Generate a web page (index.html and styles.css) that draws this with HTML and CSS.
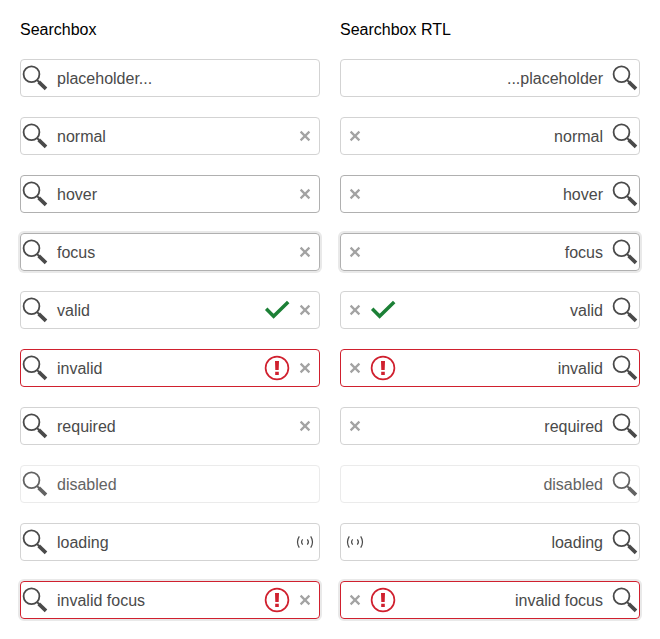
FILE: index.html
```html
<!DOCTYPE html>
<html lang="en">
<head>
<meta charset="utf-8">
<title>Searchbox</title>
<link rel="stylesheet" href="styles.css">
</head>
<body>
<svg class="defs" aria-hidden="true">
  <symbol id="search" viewBox="0 0 24 24"><circle cx="8.5" cy="8.3" r="7.9" fill="none" stroke="currentColor" stroke-width="1.8"/><path d="M14 14l2.4 2.4" stroke="currentColor" stroke-width="2"/><path d="M15.7 15.8L23 22.8" stroke="currentColor" stroke-width="3.7"/></symbol>
  <symbol id="clear" viewBox="0 0 24 24"><path d="M7.6 7.6l8.8 8.8M16.4 7.6l-8.8 8.8" fill="none" stroke="currentColor" stroke-width="2.2"/></symbol>
  <symbol id="valid" viewBox="0 0 24 24"><path d="M1.2 10.8L8.6 18.2L23.2 3.9" fill="none" stroke="currentColor" stroke-width="3.5"/></symbol>
  <symbol id="invalid" viewBox="0 0 24 24"><circle cx="12" cy="12" r="11.4" fill="none" stroke="currentColor" stroke-width="1.7"/><path d="M10 5h4l-.3 9h-3.4zM10.2 15.7h3.6v3.4h-3.6z" fill="currentColor"/></symbol>
  <symbol id="loading" viewBox="0 0 24 24"><path d="M6.3 6.4Q2.7 12 6.3 17.6M17.7 6.4Q21.3 12 17.7 17.6M9.7 9.4Q7.5 12 9.7 14.6M14.3 9.4Q16.5 12 14.3 14.6" fill="none" stroke="currentColor" stroke-width="1.2"/></symbol>
</svg>
<main class="page">
  <section class="column">
    <h2>Searchbox</h2>
    <div class="box"><svg class="icon"><use href="#search"/></svg><span class="text">placeholder...</span></div>
    <div class="box"><svg class="icon"><use href="#search"/></svg><span class="text">normal</span><svg class="icon clear"><use href="#clear"/></svg></div>
    <div class="box hover"><svg class="icon"><use href="#search"/></svg><span class="text">hover</span><svg class="icon clear"><use href="#clear"/></svg></div>
    <div class="box focus"><svg class="icon"><use href="#search"/></svg><span class="text">focus</span><svg class="icon clear"><use href="#clear"/></svg></div>
    <div class="box"><svg class="icon"><use href="#search"/></svg><span class="text">valid</span><svg class="icon ok"><use href="#valid"/></svg><svg class="icon clear"><use href="#clear"/></svg></div>
    <div class="box invalid"><svg class="icon"><use href="#search"/></svg><span class="text">invalid</span><svg class="icon error"><use href="#invalid"/></svg><svg class="icon clear"><use href="#clear"/></svg></div>
    <div class="box"><svg class="icon"><use href="#search"/></svg><span class="text">required</span><svg class="icon clear"><use href="#clear"/></svg></div>
    <div class="box disabled"><svg class="icon"><use href="#search"/></svg><span class="text">disabled</span></div>
    <div class="box"><svg class="icon"><use href="#search"/></svg><span class="text">loading</span><svg class="icon"><use href="#loading"/></svg></div>
    <div class="box focus invalid"><svg class="icon"><use href="#search"/></svg><span class="text">invalid focus</span><svg class="icon error"><use href="#invalid"/></svg><svg class="icon clear"><use href="#clear"/></svg></div>
  </section>
  <section class="column mirrored">
    <h2>Searchbox RTL</h2>
    <div class="box"><svg class="icon"><use href="#search"/></svg><span class="text">...placeholder</span></div>
    <div class="box"><svg class="icon"><use href="#search"/></svg><span class="text">normal</span><svg class="icon clear"><use href="#clear"/></svg></div>
    <div class="box hover"><svg class="icon"><use href="#search"/></svg><span class="text">hover</span><svg class="icon clear"><use href="#clear"/></svg></div>
    <div class="box focus"><svg class="icon"><use href="#search"/></svg><span class="text">focus</span><svg class="icon clear"><use href="#clear"/></svg></div>
    <div class="box"><svg class="icon"><use href="#search"/></svg><span class="text">valid</span><svg class="icon ok"><use href="#valid"/></svg><svg class="icon clear"><use href="#clear"/></svg></div>
    <div class="box invalid"><svg class="icon"><use href="#search"/></svg><span class="text">invalid</span><svg class="icon error"><use href="#invalid"/></svg><svg class="icon clear"><use href="#clear"/></svg></div>
    <div class="box"><svg class="icon"><use href="#search"/></svg><span class="text">required</span><svg class="icon clear"><use href="#clear"/></svg></div>
    <div class="box disabled"><svg class="icon"><use href="#search"/></svg><span class="text">disabled</span></div>
    <div class="box"><svg class="icon"><use href="#search"/></svg><span class="text">loading</span><svg class="icon"><use href="#loading"/></svg></div>
    <div class="box focus invalid"><svg class="icon"><use href="#search"/></svg><span class="text">invalid focus</span><svg class="icon error"><use href="#invalid"/></svg><svg class="icon clear"><use href="#clear"/></svg></div>
  </section>
</main>
</body>
</html>
```
FILE: styles.css
```css
* { box-sizing: border-box; }
body {
  margin: 0;
  background: #fff;
  color: #000;
  font: 16px/19px "Liberation Sans", Arial, sans-serif;
}
.defs { display: none; }
.page {
  display: grid;
  grid-template-columns: 300px 300px;
  gap: 20px;
  padding: 20px;
}
.column {
  display: flex;
  flex-direction: column;
  gap: 20px;
}
h2 {
  margin: 0;
  font-size: 16px;
  font-weight: 400;
  line-height: 19px;
}
.box {
  display: flex;
  align-items: center;
  gap: 4px;
  height: 38px;
  padding: 0 2px;
  border: 1px solid #d3d3d3;
  border-radius: 4px;
  color: #4a4a4a;
}
.mirrored .box { flex-direction: row-reverse; }
.text {
  flex: 1;
  margin: 0 6px;
}
.mirrored .text { text-align: right; }
.icon {
  flex: none;
  width: 24px;
  height: 24px;
  overflow: visible;
}
.icon use, symbol { overflow: visible; }
.clear { color: #a3a3a3; }
.ok { color: #1c8036; }
.error { color: #d0202e; }
.hover { border-color: #b0b0b0; }
.focus {
  border-color: #b0b0b0;
  box-shadow: 0 0 0 2px #e9e9e9;
}
.invalid { border-color: #d0202e; }
.disabled {
  border-color: #ebebeb;
  color: #636363;
}
```
